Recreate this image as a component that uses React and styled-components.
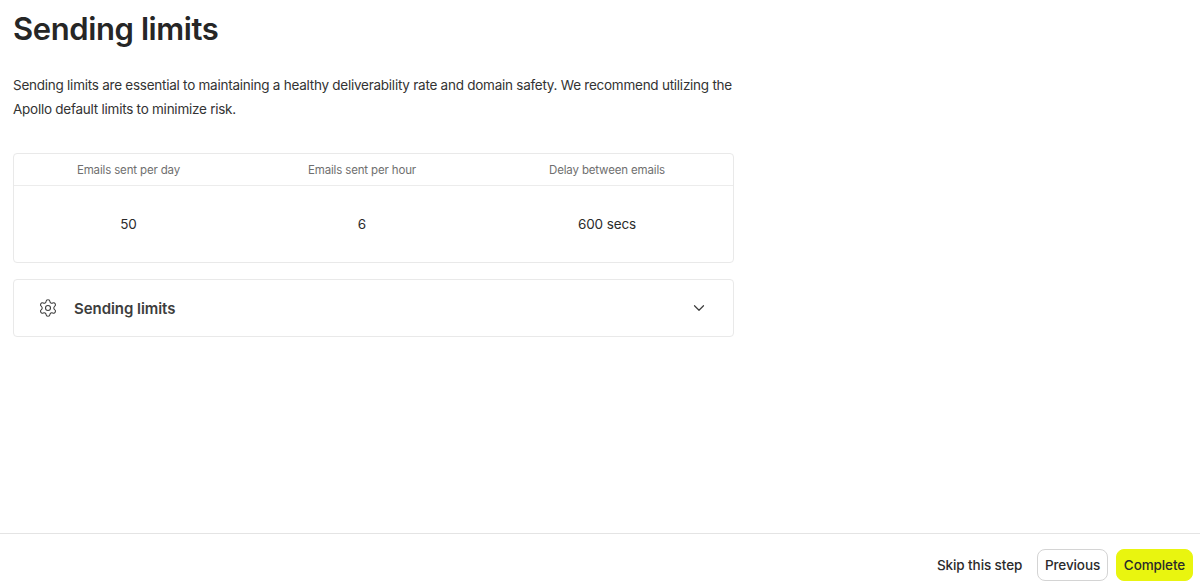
import React from "react";
import styled, { createGlobalStyle } from "styled-components";
import { Settings, ChevronDown } from "lucide-react";

const Global = createGlobalStyle`
  html, body { margin: 0; padding: 0; background: #fff; }
  body { font-family: Inter, "Liberation Sans", sans-serif; color: #2b2b2b; }
`;
const Page = styled.div`
  height: 585px; display: flex; flex-direction: column; overflow: hidden;
`;
const Content = styled.main`
  flex: 1; padding: 9px 0 0 13px; width: 721px;
`;
const Title = styled.h1`
  margin: 0; font-size: 31px; line-height: 40px; font-weight: 600; letter-spacing: -0.4px; color: #262626;
`;
const Intro = styled.p`
  margin: 24px 0 0; width: 721px; font-size: 13.5px; line-height: 24px; color: #333; letter-spacing: -0.25px;
`;
const Card = styled.section`
  border: 1px solid #e9e9e9; border-radius: 4px; box-sizing: border-box; width: 721px;
`;
const LimitsCard = styled(Card)`
  margin-top: 32px; height: 110px;
`;
const Row = styled.div`
  display: grid; grid-template-columns: 229px 238px 1fr; text-align: center;
`;
const HeadRow = styled(Row)`
  height: 32px; box-sizing: border-box; align-items: center; border-bottom: 1px solid #ececec;
  font-size: 11.5px; color: #6f6f6f; font-weight: 400; letter-spacing: -0.15px;
`;
const ValueRow = styled(Row)`
  height: 76px; align-items: center; font-size: 13.5px; color: #2b2b2b; letter-spacing: -0.1px;
`;
const Accordion = styled(Card)`
  margin-top: 16px; height: 58px; display: flex; align-items: center; padding: 0 25px 0 24px; color: #3d3d3d;
`;
const AccordionTitle = styled.span`
  margin-left: 16px; flex: 1; font-size: 15px; font-weight: 600; color: #3d3d3d; letter-spacing: -0.05px;
`;
const Footer = styled.footer`
  height: 52px; box-sizing: border-box; border-top: 1px solid #e4e4e4; display: flex; align-items: flex-start;
  justify-content: flex-end; padding: 15px 7px 0 0;
`;
const Button = styled.button`
  font: inherit; font-size: 13.5px; font-weight: 500; color: #2b2b2b; height: 32px; border-radius: 8px;
  box-sizing: border-box; cursor: pointer; padding: 0; background: #fff; border: 1px solid transparent;
  white-space: nowrap; letter-spacing: -0.1px;
`;
const SkipButton = styled(Button)`
  width: 86px; margin-right: 15px;
`;
const PreviousButton = styled(Button)`
  width: 71px; margin-right: 8px; border-color: #d4d4d4;
`;
const CompleteButton = styled(Button)`
  width: 77px; background: #e9f50f; border-color: #e9f50f;
`;

export default function App() {
  return (
    <Page>
      <Global />
      <Content>
        <Title>Sending limits</Title>
        <Intro>
          Sending limits are essential to maintaining a healthy deliverability rate and domain safety. We recommend utilizing the Apollo default limits to minimize risk.
        </Intro>
        <LimitsCard>
          <HeadRow>
            <span>Emails sent per day</span>
            <span>Emails sent per hour</span>
            <span>Delay between emails</span>
          </HeadRow>
          <ValueRow>
            <span>50</span>
            <span>6</span>
            <span>600 secs</span>
          </ValueRow>
        </LimitsCard>
        <Accordion>
          <Settings size={20} strokeWidth={1.3} />
          <AccordionTitle>Sending limits</AccordionTitle>
          <ChevronDown size={18} strokeWidth={1.6} />
        </Accordion>
      </Content>
      <Footer>
        <SkipButton>Skip this step</SkipButton>
        <PreviousButton>Previous</PreviousButton>
        <CompleteButton>Complete</CompleteButton>
      </Footer>
    </Page>
  );
}
